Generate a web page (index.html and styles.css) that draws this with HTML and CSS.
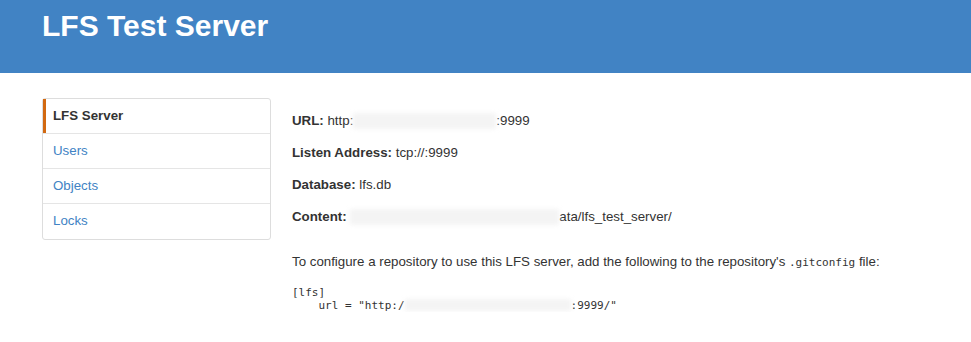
FILE: index.html
```html
<!DOCTYPE html>
<html lang="en">

<head>
    <meta charset="UTF-8">
    <meta name="viewport" content="width=device-width, initial-scale=1.0">
    <title>LFS Test Server</title>
    <link rel="stylesheet" href="styles.css">
</head>

<body>
    <div class="header">
        <h1>LFS Test Server</h1>
    </div>

    <div class="container">
        <div class="sidebar">
            <a class="item active" href="#">LFS Server</a>
            <a class="item" href="#">Users</a>
            <a class="item" href="#">Objects</a>
            <a class="item" href="#">Locks</a>
        </div>

        <div class="content">
            <p><b>URL:</b> http:<span class="hidden w-url"></span>:9999</p>
            <p><b>Listen Address:</b> tcp://:9999</p>
            <p><b>Database:</b> lfs.db</p>
            <p><b>Content:</b> <span class="hidden w-content"></span>ata/lfs_test_server/</p>

            <p class="config">To configure a repository to use this LFS server, add the following to the repository's <code>.gitconfig</code> file:</p>
<pre>[lfs]
    url = "http:/<span class="hidden w-pre"></span>:9999/"</pre>
        </div>
    </div>
</body>

</html>
```

FILE: styles.css
```css
body {
    margin: 0;
    font-family: "Liberation Sans", Arial, sans-serif;
    font-size: 13.3px;
    line-height: 20px;
    color: #333;
    background-color: #fff;
}

.header {
    height: 73px;
    background-color: #4183c4;
    padding: 0 42px;
    box-sizing: border-box;
}

.header h1 {
    margin: 0;
    padding-top: 5px;
    font-size: 30px;
    line-height: 42px;
    font-weight: bold;
    color: #fff;
}

.container {
    display: flex;
    align-items: flex-start;
    padding: 25px 42px 0;
    gap: 21px;
}

.sidebar {
    width: 229px;
    box-sizing: border-box;
    border: 1px solid #ddd;
    border-radius: 3px;
    display: flex;
    flex-direction: column;
    flex-shrink: 0;
}

.item {
    padding: 7px 10px;
    line-height: 20px;
    color: #4183c4;
    text-decoration: none;
    border-top: 1px solid #e5e5e5;
}

.item:first-child {
    border-top: none;
}

.item:last-child {
    padding-bottom: 8px;
}

.active {
    color: #333;
    font-weight: bold;
    box-shadow: inset 3px 0 0 #d26911;
}

.content {
    padding-top: 13px;
}

.content p {
    margin: 0 0 12px;
}

.content p.config {
    margin-top: 25px;
    margin-bottom: 13px;
}

code,
pre {
    font-family: "DejaVu Sans Mono", "Liberation Mono", monospace;
    font-size: 11px;
}

pre {
    margin: 0;
    line-height: 13px;
    color: #333;
}

.hidden {
    display: inline-block;
    height: 16px;
    vertical-align: middle;
    background-color: #f4f4f4;
    filter: blur(2px);
}

.w-url {
    width: 143px;
}

.w-content {
    width: 209px;
}

pre .hidden {
    height: 12px;
    vertical-align: -2px;
}

.w-pre {
    width: 166px;
}
```
